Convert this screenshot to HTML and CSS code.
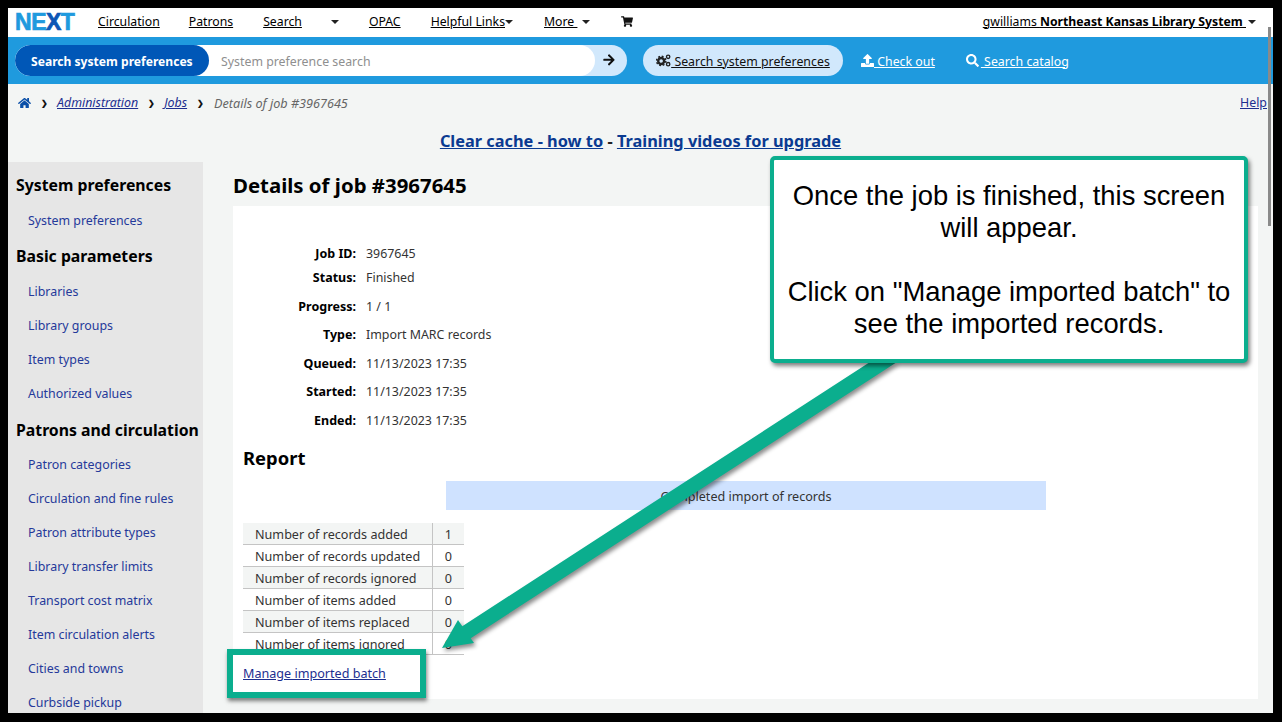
FILE: index.html
```html
<!DOCTYPE html>
<html lang="en">
<head>
<meta charset="utf-8">
<title>Details of job #3967645</title>
<link rel="stylesheet" href="styles.css">
</head>
<body>
<div class="app">
  <nav class="topnav">
    <span class="logo"><span class="l1">N</span><span class="l2">E</span><span class="l3">X</span><span class="l4">T</span></span>
    <a class="nav-a n1" href="#">Circulation</a>
    <a class="nav-a n2" href="#">Patrons</a>
    <a class="nav-a n3" href="#">Search</a>
    <i class="caret c3"></i>
    <a class="nav-a n4" href="#">OPAC</a>
    <a class="nav-a n5" href="#">Helpful Links</a><i class="caret"></i>
    <a class="nav-a n6" href="#">More&nbsp;</a><i class="caret c6"></i>
    <svg class="cart" viewBox="0 0 576 512"><path d="M528 301l47-208c3-15-8-29-24-29H159l-9-45C148 8 138 0 126 0H24C11 0 0 11 0 24v16c0 13 11 24 24 24h70l70 343c-17 10-28 28-28 49 0 31 25 56 56 56s56-25 56-56c0-16-6-30-17-40h210c-11 10-17 24-17 40 0 31 25 56 56 56s56-25 56-56c0-22-13-41-32-50l6-25c3-15-8-29-24-29H212l-6-32h298c11 0 21-8 24-19z"/></svg>
    <a class="nav-user" href="#">gwilliams <b>Northeast Kansas Library System&nbsp;</b></a><i class="caret cu"></i>
  </nav>
  <div class="searchbar">
    <div class="searchform">
      <span class="searchlabel">Search system preferences</span>
      <span class="searchinput">System preference search</span>
      <span class="searchgo"><svg viewBox="0 0 448 512"><path d="M190 41l22-22c10-10 25-10 34 0l194 194c9 9 9 24 0 34L246 441c-9 10-24 10-34 0l-22-22c-10-10-9-25 0-35l120-114H24c-13 0-24-11-24-24v-32c0-13 11-24 24-24h286L190 76c-10-10-10-25 0-35z"/></svg></span>
    </div>
    <a class="pill" href="#"><svg viewBox="0 0 16 14"><circle cx="5.5" cy="7.5" r="3.2" fill="none" stroke="#222" stroke-width="2.6"/><circle cx="5.5" cy="7.5" r="5" fill="none" stroke="#222" stroke-width="1.6" stroke-dasharray="2 1.93"/><circle cx="13" cy="3" r="1.8" fill="none" stroke="#222" stroke-width="1.5"/><circle cx="13" cy="11" r="1.8" fill="none" stroke="#222" stroke-width="1.5"/></svg> Search system preferences</a>
    <a class="tab tab1" href="#"><svg viewBox="0 0 512 512"><path fill="#fff" d="M296 384h-80c-13 0-24-11-24-24V192h-88c-18 0-27-21-14-34L242 7c8-8 20-8 28 0l152 151c13 13 4 34-14 34h-88v168c0 13-11 24-24 24zM512 376v112c0 13-11 24-24 24H24c-13 0-24-11-24-24V376c0-13 11-24 24-24h136v8c0 31 25 56 56 56h80c31 0 56-25 56-56v-8h136c13 0 24 11 24 24z"/></svg> Check out</a>
    <a class="tab tab2" href="#"><svg viewBox="0 0 512 512"><path fill="#fff" d="M505 443L405 343c-4-4-10-7-17-7h-16c28-35 44-80 44-128C416 93 323 0 208 0S0 93 0 208s93 208 208 208c48 0 93-16 128-44v16c0 7 3 13 7 17l100 100c9 9 24 9 34 0l28-28c9-10 9-25 0-34zM208 336c-71 0-128-57-128-128S137 80 208 80s128 57 128 128-57 128-128 128z"/></svg> Search catalog</a>
  </div>
  <div class="crumbs">
    <svg class="home" viewBox="0 0 576 512"><path fill="#0a4fa8" d="M280 148L96 300v164c0 9 7 16 16 16l112 0c9 0 16-7 16-16v-96c0-9 7-16 16-16h64c9 0 16 7 16 16v96c0 9 7 16 16 16l112 0c9 0 16-7 16-16V300L296 148c-5-4-11-4-16 0zM572 251l-84-69V44c0-7-5-12-12-12h-56c-7 0-12 5-12 12v72l-89-74c-18-14-43-14-61 0L4 251c-5 4-6 12-2 17l26 31c4 5 12 6 17 2L280 107c5-4 11-4 16 0l235 194c5 4 13 3 17-2l26-31c4-5 3-13-2-17z"/></svg>
    <span class="sep">&#10095;</span>
    <a href="#">Administration</a>
    <span class="sep">&#10095;</span>
    <a href="#">Jobs</a>
    <span class="sep">&#10095;</span>
    <span class="current">Details of job #3967645</span>
    <a class="help" href="#">Help</a>
  </div>
  <div class="notice"><a href="#">Clear cache - how to</a> - <a href="#">Training videos for upgrade</a></div>
  <div class="main">
    <aside class="side">
      <h5>System preferences</h5>
      <ul><li><a href="#">System preferences</a></li></ul>
      <h5>Basic parameters</h5>
      <ul>
        <li><a href="#">Libraries</a></li>
        <li><a href="#">Library groups</a></li>
        <li><a href="#">Item types</a></li>
        <li><a href="#">Authorized values</a></li>
      </ul>
      <h5 class="h-third">Patrons and circulation</h5>
      <ul>
        <li><a href="#">Patron categories</a></li>
        <li><a href="#">Circulation and fine rules</a></li>
        <li><a href="#">Patron attribute types</a></li>
        <li><a href="#">Library transfer limits</a></li>
        <li><a href="#">Transport cost matrix</a></li>
        <li><a href="#">Item circulation alerts</a></li>
        <li><a href="#">Cities and towns</a></li>
        <li><a href="#">Curbside pickup</a></li>
      </ul>
    </aside>
    <section class="content">
      <h1>Details of job #3967645</h1>
      <div class="card">
        <div class="facts">
          <div class="fact short"><b>Job ID:</b><span>3967645</span></div>
          <div class="fact"><b>Status:</b><span>Finished</span></div>
          <div class="fact"><b>Progress:</b><span>1 / 1</span></div>
          <div class="fact"><b>Type:</b><span>Import MARC records</span></div>
          <div class="fact"><b>Queued:</b><span>11/13/2023 17:35</span></div>
          <div class="fact"><b>Started:</b><span>11/13/2023 17:35</span></div>
          <div class="fact"><b>Ended:</b><span>11/13/2023 17:35</span></div>
        </div>
        <h2>Report</h2>
        <div class="alert">Completed import of records</div>
        <table class="stats">
          <tr><td>Number of records added</td><td>1</td></tr>
          <tr><td>Number of records updated</td><td>0</td></tr>
          <tr><td>Number of records ignored</td><td>0</td></tr>
          <tr><td>Number of items added</td><td>0</td></tr>
          <tr><td>Number of items replaced</td><td>0</td></tr>
          <tr><td>Number of items ignored</td><td>0</td></tr>
        </table>
        <a class="manage" href="#">Manage imported batch</a>
      </div>
    </section>
  </div>
  <div class="scroll-thumb"></div>
</div>
<svg class="arrow" viewBox="0 0 1282 722"><polygon points="897,362 870,362 462.3,626.2 458,620 442,648 474,643 470.7,638.2"/></svg>
<div class="callout">
  <p>Once the job is finished, this screen will appear.</p>
  <p>Click on "Manage imported batch" to see the imported records.</p>
</div>
<div class="hilite"></div>
</body>
</html>
```
FILE: styles.css
```css
* { box-sizing: border-box; }
html, body { margin: 0; height: 722px; overflow: hidden; background: #000; }
body { padding: 8px 9px 9px 8px; font: 12.5px/18px "Noto Sans", "Open Sans", sans-serif; color: #333; position: relative; }
a { color: #1d2e8f; }
.app { position: relative; height: 705px; background: #f3f5f4; overflow: hidden; display: flex; flex-direction: column; }

.topnav { height: 29px; flex: none; background: #fff; display: flex; align-items: center; padding: 0 0 2px 7px; font-size: 12.25px; }
.logo { font: 900 23px/25px "Liberation Sans", Inter, sans-serif; letter-spacing: -.5px; width: 83px; margin-top: 2px; -webkit-text-stroke: .7px currentColor; }
.l1 { color: #1f9ade; } .l2 { color: #1f9ade; } .l3 { color: #0c56b5; } .l4 { color: #1f9ade; }
.nav-a { color: #000; }
.n2 { margin-left: 29px; }
.n3, .n4, .n5 { margin-left: 30px; }
.n6 { margin-left: 31px; }
.caret { display: inline-block; width: 0; height: 0; border: 4px solid transparent; border-top: 4px solid #222; border-bottom: 0; margin-left: 0; }
.c3 { margin-left: 29px; }
.c6 { margin-left: 5px; }
.cart { width: 12px; height: 11px; margin-left: 31px; fill: #111; }
.nav-user { margin-left: auto; color: #000; }
.cu { margin: 0 17px 0 2px; }

.searchbar { height: 47px; flex: none; background: #1f9ade; display: flex; align-items: center; padding-left: 7px; font-size: 12.35px; }
.searchform { width: 612px; height: 31px; border-radius: 16px; background: #d1e8fc; display: flex; align-items: center; position: relative; overflow: hidden; }
.searchlabel { width: 194px; height: 31px; line-height: 34px; flex: none; background: #0057b7; color: #fff; font-weight: 700; font-size: 12.1px; padding-left: 16px; border-radius: 16px; position: relative; z-index: 1; }
.searchinput { width: 398px; height: 31px; line-height: 34px; flex: none; margin-left: -12px; padding-left: 24px; background: #fff; color: #8f8f8f; border-radius: 0 16px 16px 0; }
.searchgo { flex: 1; display: flex; justify-content: center; padding-right: 4px; }
.searchgo svg { width: 12px; height: 13px; fill: #111; }
.pill { margin-left: 16px; height: 31px; width: 200px; border-radius: 16px; background: #d1e8fc; color: #111; display: flex; align-items: center; justify-content: center; white-space: pre; padding-top: 2px; }
.pill svg { width: 15px; height: 13px; margin-top: -2px; }
.tab { color: #fff; display: flex; align-items: center; white-space: pre; margin-left: 31px; padding-top: 2px; }
.tab1 { margin-left: 18px; }
.tab svg { width: 13px; height: 13px; margin-top: -2px; }
.tab2 svg { margin-right: 2px; }

.crumbs { height: 39px; flex: none; display: flex; align-items: center; padding: 0 6px 1px 10px; font-style: italic; font-size: 12.4px; }
.crumbs a { color: #1d2e8f; }
.home { width: 13px; height: 12px; }
.sep { font-style: normal; font-weight: 700; font-size: 8px; color: #111; margin: 0 9.5px; }
.current { color: #666; font-size: 12.65px; margin-left: 1px; }
.crumbs .help { margin-left: auto; font-style: normal; }

.notice { height: 39px; flex: none; text-align: center; font-size: 16.35px; font-weight: 700; line-height: 37px; color: #222; }
.notice a { color: #0a3a91; }

.main { flex: 1; display: flex; min-height: 0; }
.side { width: 195px; flex: none; background: #e6e6e6; padding: 4px 0 0 8px; overflow: hidden; font-size: 12.4px; }
.side h5 { margin: 0; height: 38px; font-size: 15.8px; line-height: 24px; padding-top: 7px; font-weight: 700; color: #000; white-space: nowrap; }
.side .h-third { height: 37px; margin-top: 1px; }
.side ul { list-style: none; margin: 0 0 -1px; padding: 0 0 0 12px; }
.side li { height: 34px; line-height: 34px; white-space: nowrap; }
.side a { text-decoration: none; color: #25399a; }

.content { flex: 1; padding: 0 15px 14px 30px; display: flex; flex-direction: column; min-width: 0; }
.content h1 { margin: 0; height: 44px; font-size: 20.4px; line-height: 46px; font-weight: 700; color: #000; }
.card { flex: 1; background: #fff; padding: 34px 10px 0; font-size: 12.6px; }
.facts { margin-bottom: 7px; }
.fact { display: flex; height: 28.6px; line-height: 28px; }
.fact.short { height: 24px; }
.fact b { width: 113px; text-align: right; color: #000; margin-right: 10px; font-size: 12.5px; }
.fact span { font-size: 12.4px; }
.card h2 { margin: 0; height: 38px; font-size: 18.4px; line-height: 30px; color: #000; }
.alert { margin-left: 203px; width: 600px; height: 29px; line-height: 31px; background: #cfe2ff; text-align: center; }
.stats { border-collapse: collapse; margin-top: 13px; table-layout: fixed; width: 221px; }
.stats tr { height: 22px; }
.stats td { padding: 2px 0 0 12px; line-height: 19px; border-bottom: 1px solid #c4c4c4; width: 189px; white-space: nowrap; }
.stats td + td { border-left: 1px solid #c4c4c4; padding: 2px 0 0; width: 32px; text-align: center; }
.stats tr:nth-child(odd) { background: #f3f5f4; }
.manage { display: block; margin-top: 10px; width: max-content; color: #1d2e8f; }

.scroll-thumb { position: absolute; right: 2px; top: 19px; width: 3px; height: 199px; background: #8a8a8a; }

.callout { position: absolute; left: 770px; top: 156px; width: 478px; height: 207px; background: #fff; border: 4px solid #0bae8e; border-radius: 5px; box-shadow: 2px 3px 4px rgba(0,0,0,.5); color: #000; font: 27.4px/32px "Liberation Sans", Arial, sans-serif; text-align: center; padding: 20px 6px 0; }
.callout p { margin: 0 0 32px; }
.hilite { position: absolute; left: 227px; top: 649px; width: 199px; height: 49px; border: 6px solid #0bae8e; box-shadow: 1px 3px 4px rgba(0,0,0,.5); }
.arrow { position: absolute; left: 0; top: 0; width: 1282px; height: 722px; fill: #0bae8e; filter: drop-shadow(2px 3px 2px rgba(0,0,0,.45)); pointer-events: none; }
```
